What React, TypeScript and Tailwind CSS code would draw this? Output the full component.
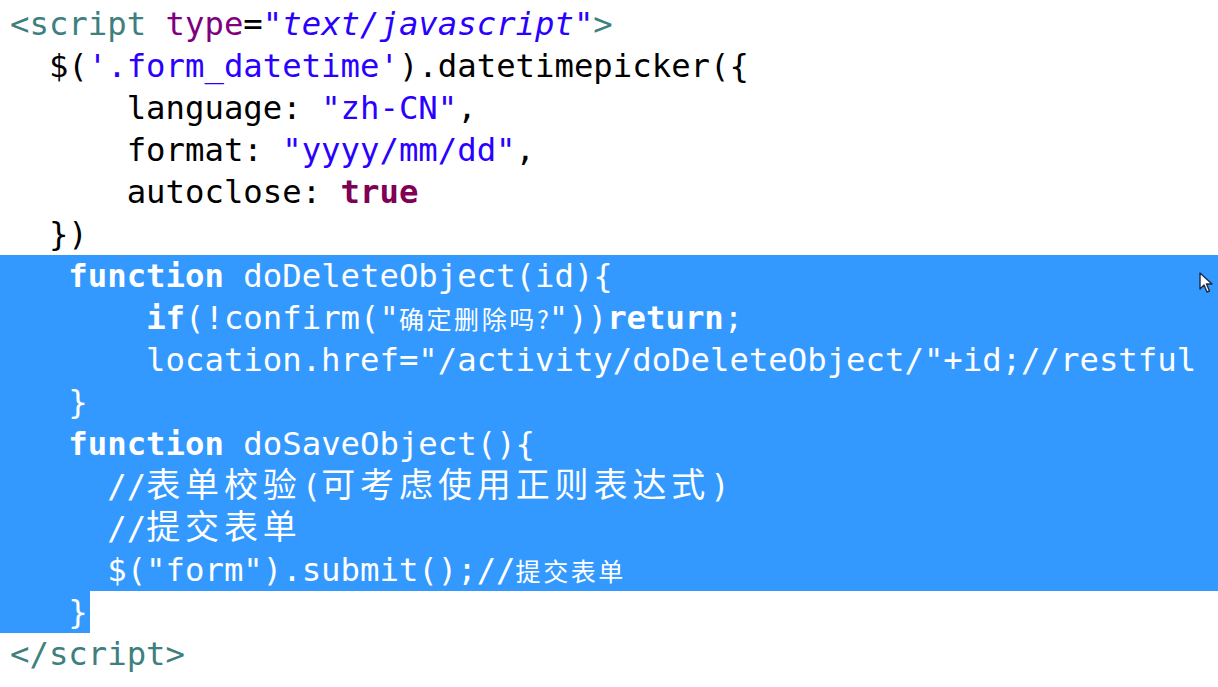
const mono = "font-['DejaVu_Sans_Mono','Liberation_Mono',monospace]";
const cjkBig = "font-['Noto_Sans_CJK_SC',sans-serif] text-[34px] leading-none tracking-[4.9px]";
const cjkSmall = "font-['Noto_Sans_CJK_SC',sans-serif] text-[25px] leading-none tracking-[2.6px]";

function Line({ children, className = "" }: { children?: React.ReactNode; className?: string }) {
  return <div className={`h-[42px] whitespace-pre pl-[10px] leading-[42px] ${className}`}>{children}</div>;
}

function Cursor() {
  return (
    <svg className="absolute left-[1199px] top-[272px]" width="14" height="22" viewBox="0 0 14 22">
      <path d="M1 1 L1 17 L5 13 L8 20 L10.5 19 L7.5 12 L13 12 Z" fill="#fff" stroke="#1d2a44" strokeWidth="1.4" strokeLinejoin="round" />
    </svg>
  );
}

export default function App() {
  return (
    <div className={`relative h-[687px] w-[1218px] overflow-hidden bg-white pt-[3px] text-[32.3px] text-black ${mono}`}>
      <Line>
        <span className="text-[#3f7f7f]">&lt;script </span>
        <span className="text-[#7f007f]">type</span>=
        <span className="italic text-[#2a00ff]">"text/javascript"</span>
        <span className="text-[#3f7f7f]">&gt;</span>
      </Line>
      <Line>
        {"  $("}
        <span className="text-[#2a00ff]">'.form_datetime'</span>
        {").datetimepicker({"}
      </Line>
      <Line>
        {"      language: "}
        <span className="text-[#2a00ff]">"zh-CN"</span>,
      </Line>
      <Line>
        {"      format: "}
        <span className="text-[#2a00ff]">"yyyy/mm/dd"</span>,
      </Line>
      <Line>
        {"      autoclose: "}
        <span className="font-bold text-[#7f0055]">true</span>
      </Line>
      <Line>{"  })"}</Line>
      <div className="bg-[#3399ff] text-white">
        <Line>
          {"   "}
          <b>function</b>
          {" doDeleteObject(id){"}
        </Line>
        <Line>
          {"       "}
          <b>if</b>
          {'(!confirm("'}
          <span className={cjkSmall}>确定删除吗</span>
          <span className="font-['Noto_Sans_CJK_SC',sans-serif] text-[25px] leading-none">?</span>
          {'"))'}
          <b>return</b>;
        </Line>
        <Line>{'       location.href="/activity/doDeleteObject/"+id;//restful'}</Line>
        <Line>{"   }"}</Line>
        <Line>
          {"   "}
          <b>function</b>
          {" doSaveObject(){"}
        </Line>
        <Line>
          {"     //"}
          <span className={cjkBig}>表单校验</span>(
          <span className={cjkBig}>可考虑使用正则表达式</span>)
        </Line>
        <Line>
          {"     //"}
          <span className={cjkBig}>提交表单</span>
        </Line>
        <Line>
          {'     $("form").submit();//'}
          <span className={cjkSmall}>提交表单</span>
        </Line>
      </div>
      <div className="flex">
        <Line className="bg-[#3399ff] pr-[2px] text-white">{"   }"}</Line>
      </div>
      <Line>
        <span className="text-[#3f7f7f]">&lt;/script&gt;</span>
      </Line>
      <Cursor />
    </div>
  );
}
